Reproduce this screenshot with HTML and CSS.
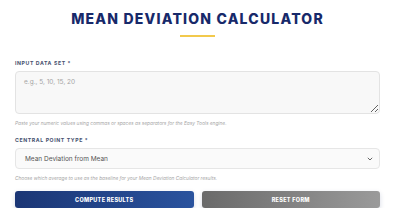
FILE: index.html
```html
<!DOCTYPE html>
<html>
<head>
<meta charset="utf-8">
<link rel="stylesheet" href="styles.css">
</head>
<body>
<div class="calc">
  <h1 class="title">MEAN DEVIATION CALCULATOR</h1>
  <div class="title-bar"></div>
  <div class="field field-first">
    <label class="label">INPUT DATA SET *</label>
    <textarea class="textarea" placeholder="e.g., 5, 10, 15, 20"></textarea>
    <p class="help">Paste your numeric values using commas or spaces as separators for the Easy Tools engine.</p>
  </div>
  <div class="field field-second">
    <label class="label">CENTRAL POINT TYPE *</label>
    <div class="select">
      <span>Mean Deviation from Mean</span>
      <svg class="chev" width="6" height="4" viewBox="0 0 6 4"><path d="M0.8 0.8 L3 3 L5.2 0.8" fill="none" stroke="#666" stroke-width="1"/></svg>
    </div>
    <p class="help">Choose which average to use as the baseline for your Mean Deviation Calculator results.</p>
  </div>
  <div class="buttons">
    <button class="btn btn-primary">COMPUTE RESULTS</button>
    <button class="btn btn-secondary">RESET FORM</button>
  </div>
</div>
</body>
</html>
```
FILE: styles.css
```css
* { box-sizing: border-box; }
html, body { margin: 0; padding: 0; background: #fff; }
body { font-family: Inter, "Open Sans", sans-serif; }
.calc { padding: 9px 15px 0 15px; }
.title {
  margin: 0;
  text-align: center;
  font-size: 14px;
  line-height: 20px;
  font-weight: 800;
  letter-spacing: 1.2px;
  color: #17296a;
}
.title-bar {
  width: 35px;
  height: 2px;
  background: #f2c94c;
  margin: 6px auto 0;
}
.field { display: flex; flex-direction: column; }
.field-first { margin-top: 22px; }
.field-second { margin-top: 9px; }
.label {
  font-size: 5.2px;
  font-weight: 700;
  letter-spacing: 0.6px;
  color: #475270;
  line-height: 8px;
}
.textarea {
  margin-top: 4px;
  height: 43px;
  border: 1px solid #e3e3e3;
  border-radius: 4px;
  background: #f8f8f8;
  font-family: inherit;
  font-size: 6.5px;
  padding: 6px 8px;
  resize: vertical;
  color: #444;
}
.textarea::placeholder { color: #a5a5a5; }
.help {
  margin: 6px 0 0;
  font-size: 4.8px;
  font-style: italic;
  color: #a8a8a8;
  line-height: 7px;
}
.select {
  margin-top: 4px;
  height: 21px;
  border: 1px solid #e6e6e6;
  border-radius: 4px;
  background: #fafafa;
  display: flex;
  align-items: center;
  justify-content: space-between;
  padding: 0 6px 0 9px;
  font-size: 6.5px;
  color: #555;
}
.chev { display: block; }
.buttons {
  margin-top: 9px;
  display: flex;
  gap: 8px;
}
.btn {
  flex: 1;
  height: 17px;
  border: none;
  border-radius: 3px;
  color: #fff;
  font-family: inherit;
  font-size: 5.5px;
  font-weight: 800;
  letter-spacing: 0.3px;
  box-shadow: 0 2px 5px rgba(30, 50, 110, 0.18);
}
.btn-primary { background: linear-gradient(90deg, #1b3675, #2a539e); }
.btn-secondary { background: linear-gradient(90deg, #6a6a6a, #9a9a9a); }
```
